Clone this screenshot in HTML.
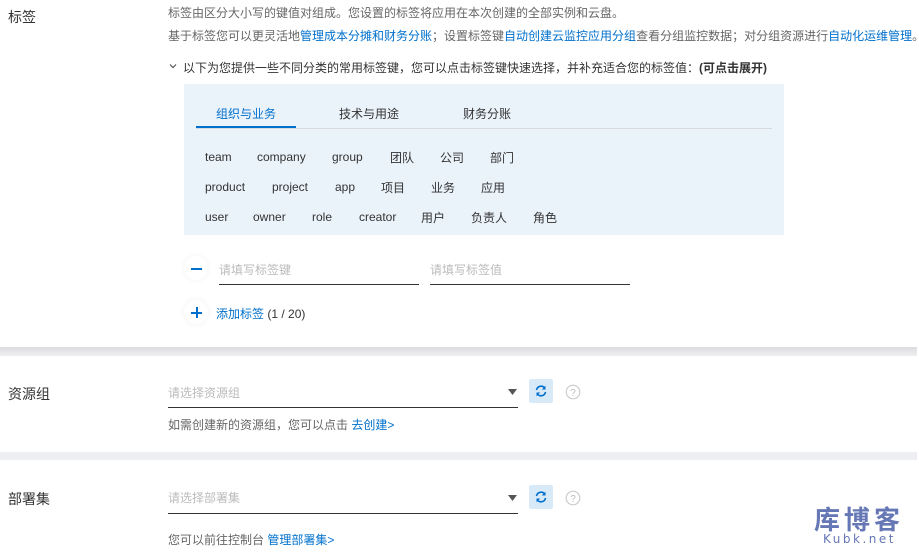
<!DOCTYPE html>
<html><head><meta charset="utf-8"><style>
body{margin:0;width:919px;height:556px;background:#fff;position:relative;overflow:hidden;font-family:"Liberation Sans","Noto Sans CJK SC",sans-serif;font-size:12px;color:#333}
.a{position:absolute;white-space:nowrap}
.g{color:#666}.b{color:#0070cc}.ph{color:#bbb}
.lbl{font-size:14px;color:#333}
.tag{position:absolute;font-size:12px;color:#333}
.circ{position:absolute;width:24px;height:24px;border-radius:50%;background:#fff;box-shadow:0 0 6px rgba(0,0,0,.06)}
</style></head><body>
<div class="a lbl" style="left:8px;top:7px">标签</div>
<div class="a g" style="left:168px;top:4px">标签由区分大小写的键值对组成。您设置的标签将应用在本次创建的全部实例和云盘。</div>
<div class="a g" style="left:168px;top:27px">基于标签您可以更灵活地<span class="b">管理成本分摊和财务分账</span>；设置标签键<span class="b">自动创建云监控应用分组</span>查看分组监控数据；对分组资源进行<span class="b">自动化运维管理</span>。</div>
<svg class="a" style="left:169px;top:62px" width="8" height="8" viewBox="0 0 8 8"><path d="M1 2.5 L4 5.5 L7 2.5" fill="none" stroke="#555" stroke-width="1.2"/></svg>
<div class="a" style="left:183px;top:59px">以下为您提供一些不同分类的常用标签键，您可以点击标签键快速选择，并补充适合您的标签值：<b>(可点击展开)</b></div>
<div class="a" style="left:184px;top:84px;width:600px;height:151px;background:#eaf2fa"></div>
<div class="a" style="left:196px;top:128px;width:576px;height:1px;background:#d5d8dc"></div>
<div class="a" style="left:196px;top:126px;width:100px;height:2px;background:#0070cc"></div>
<div class="a b" style="left:216px;top:105px">组织与业务</div>
<div class="a" style="left:339px;top:105px">技术与用途</div>
<div class="a" style="left:463px;top:105px">财务分账</div>
<div class="tag" style="left:205px;top:150px">team</div><div class="tag" style="left:257px;top:150px">company</div><div class="tag" style="left:332px;top:150px">group</div><div class="tag" style="left:390px;top:149px">团队</div><div class="tag" style="left:440px;top:149px">公司</div><div class="tag" style="left:490px;top:149px">部门</div>
<div class="tag" style="left:205px;top:180px">product</div><div class="tag" style="left:272px;top:180px">project</div><div class="tag" style="left:335px;top:180px">app</div><div class="tag" style="left:381px;top:179px">项目</div><div class="tag" style="left:431px;top:179px">业务</div><div class="tag" style="left:481px;top:179px">应用</div>
<div class="tag" style="left:205px;top:210px">user</div><div class="tag" style="left:253px;top:210px">owner</div><div class="tag" style="left:312px;top:210px">role</div><div class="tag" style="left:359px;top:210px">creator</div><div class="tag" style="left:421px;top:209px">用户</div><div class="tag" style="left:471px;top:209px">负责人</div><div class="tag" style="left:533px;top:209px">角色</div>
<div class="circ" style="left:184px;top:256px"></div>
<div class="a" style="left:191px;top:268px;width:11px;height:1.5px;background:#0070cc"></div>
<div class="a ph" style="left:219px;top:261px">请填写标签键</div>
<div class="a" style="left:219px;top:284px;width:200px;height:1px;background:#333"></div>
<div class="a ph" style="left:430px;top:261px">请填写标签值</div>
<div class="a" style="left:430px;top:284px;width:200px;height:1px;background:#333"></div>
<div class="circ" style="left:184px;top:300px"></div>
<div class="a" style="left:191px;top:312px;width:11px;height:2px;background:#0070cc"></div>
<div class="a" style="left:195.5px;top:307px;width:2px;height:11px;background:#0070cc"></div>
<div class="a" style="left:216px;top:305px"><span class="b">添加标签</span> (1 / 20)</div>
<div class="a" style="left:0;top:347px;width:917px;height:9px;background:linear-gradient(#dcdce0,#efeff2)"></div>
<div class="a lbl" style="left:8px;top:384px">资源组</div>
<div class="a ph" style="left:168px;top:384px">请选择资源组</div>
<div class="a" style="left:168px;top:407px;width:350px;height:1px;background:#333"></div>
<svg class="a" style="left:508px;top:389px" width="9" height="6"><path d="M0 0H9L4.5 6Z" fill="#555"/></svg>
<div class="a" style="left:529px;top:379px;width:24px;height:24px;background:#d8e9f8;border-radius:2px"></div>
<svg class="a" style="left:534px;top:384px" width="14" height="14" viewBox="0 0 14 14"><path d="M2.5 6 A4.6 4.6 0 0 1 11 4.5 M11.5 8 A4.6 4.6 0 0 1 3 9.5" fill="none" stroke="#0070cc" stroke-width="1.6"/><path d="M11.5 1.8V5.5H7.8Z M2.5 12.2V8.5H6.2Z" fill="#0070cc"/></svg>
<svg class="a" style="left:565px;top:384px" width="16" height="16" viewBox="0 0 16 16"><circle cx="8" cy="8" r="6.8" fill="none" stroke="#ccc" stroke-width="1.2"/><text x="8" y="12" font-size="10" text-anchor="middle" fill="#bbb" font-family="Liberation Sans">?</text></svg>
<div class="a g" style="left:168px;top:416px">如需创建新的资源组，您可以点击 <span class="b">去创建&gt;</span></div>
<div class="a" style="left:0;top:452px;width:917px;height:8px;background:#eeeff3"></div>
<div class="a lbl" style="left:8px;top:489px">部署集</div>
<div class="a ph" style="left:168px;top:489px">请选择部署集</div>
<div class="a" style="left:168px;top:513px;width:350px;height:1px;background:#333"></div>
<svg class="a" style="left:508px;top:495px" width="9" height="6"><path d="M0 0H9L4.5 6Z" fill="#555"/></svg>
<div class="a" style="left:529px;top:485px;width:24px;height:24px;background:#d8e9f8;border-radius:2px"></div>
<svg class="a" style="left:534px;top:490px" width="14" height="14" viewBox="0 0 14 14"><path d="M2.5 6 A4.6 4.6 0 0 1 11 4.5 M11.5 8 A4.6 4.6 0 0 1 3 9.5" fill="none" stroke="#0070cc" stroke-width="1.6"/><path d="M11.5 1.8V5.5H7.8Z M2.5 12.2V8.5H6.2Z" fill="#0070cc"/></svg>
<svg class="a" style="left:565px;top:490px" width="16" height="16" viewBox="0 0 16 16"><circle cx="8" cy="8" r="6.8" fill="none" stroke="#ccc" stroke-width="1.2"/><text x="8" y="12" font-size="10" text-anchor="middle" fill="#bbb" font-family="Liberation Sans">?</text></svg>
<div class="a g" style="left:168px;top:531px">您可以前往控制台 <span class="b">管理部署集&gt;</span></div>
<div class="a" style="left:814px;top:500px;font-size:26px;font-weight:bold;color:#6677b5;letter-spacing:4px">库博客</div>
<div class="a" style="left:823px;top:532px;font-size:12px;color:#6677b5;letter-spacing:2.5px;font-family:'DejaVu Sans',sans-serif">Kubk.net</div>
</body></html>
